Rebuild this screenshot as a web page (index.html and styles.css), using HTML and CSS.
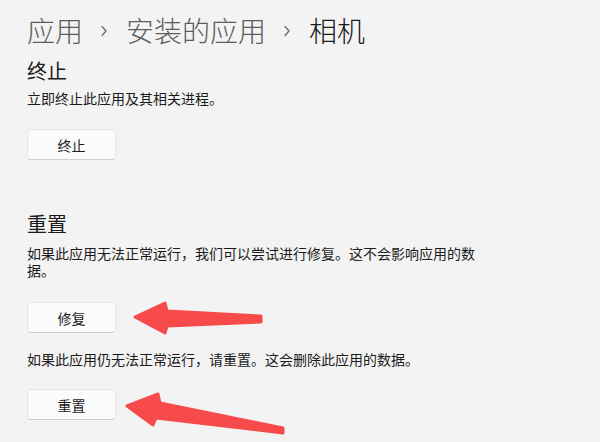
FILE: index.html
```html
<!DOCTYPE html>
<html lang="zh-CN">
<head>
<meta charset="utf-8">
<link rel="stylesheet" href="styles.css">
</head>
<body>
<div class="page">
  <nav class="crumbs">
    <span class="crumb">应用</span>
    <svg class="chev" width="8" height="12" viewBox="0 0 8 12"><path d="M2 1.5 L6 6 L2 10.5" fill="none" stroke="#6a6a6a" stroke-width="1.3" stroke-linecap="round" stroke-linejoin="round"/></svg>
    <span class="crumb">安装的应用</span>
    <svg class="chev" width="8" height="12" viewBox="0 0 8 12"><path d="M2 1.5 L6 6 L2 10.5" fill="none" stroke="#6a6a6a" stroke-width="1.3" stroke-linecap="round" stroke-linejoin="round"/></svg>
    <span class="crumb current">相机</span>
  </nav>

  <section class="section first">
    <h2 class="title">终止</h2>
    <p class="desc">立即终止此应用及其相关进程。</p>
    <button class="btn">终止</button>
  </section>

  <section class="section second">
    <h2 class="title">重置</h2>
    <p class="desc">如果此应用无法正常运行，我们可以尝试进行修复。这不会影响应用的数据。</p>
    <button class="btn btn-gap">修复</button>
    <p class="desc desc-gap">如果此应用仍无法正常运行，请重置。这会删除此应用的数据。</p>
    <button class="btn btn-gap2">重置</button>
  </section>
</div>
<svg class="arrows" width="600" height="442" viewBox="0 0 600 442">
  <polygon points="135,317 165,303 167,311 261,316 261,322 167,326 165,333" fill="#f74b4b" stroke="#f74b4b" stroke-width="3" stroke-linejoin="round"/>
  <polygon points="127,406 158,394 160,403 283,428 283,433 156,418 153,425" fill="#f74b4b" stroke="#f74b4b" stroke-width="3" stroke-linejoin="round"/>
</svg>
</body>
</html>
```

FILE: styles.css
```css
html, body {
  margin: 0;
  padding: 0;
  background: #f3f3f3;
  width: 600px;
  height: 442px;
  overflow: hidden;
}
body {
  position: relative;
  font-family: "Noto Sans CJK SC", "Noto Sans", sans-serif;
  color: #1b1b1b;
}
.page {
  display: flex;
  flex-direction: column;
  align-items: flex-start;
  padding: 10px 0 0 27px;
}
.crumbs {
  display: flex;
  align-items: center;
  height: 40px;
  font-size: 28px;
  line-height: 40px;
  font-weight: 300;
  color: #5d5d5d;
}
.crumb.current {
  color: #1a1a1a;
}
.chev {
  margin: 1px 18px 0 17px;
}
.section {
  display: flex;
  flex-direction: column;
  align-items: flex-start;
}
.section.first {
  margin-top: 7px;
}
.section.second {
  margin-top: 50px;
}
.title {
  margin: 0;
  font-size: 20px;
  line-height: 28px;
  font-weight: 400;
}
.desc {
  margin: 5px 0 0;
  font-size: 14px;
  line-height: 17px;
  max-width: 456px;
}
.second .desc {
  margin-top: 7px;
}
.second .desc.desc-gap {
  margin-top: 18px;
}
.btn {
  margin-top: 22px;
  width: 89px;
  height: 31px;
  box-sizing: border-box;
  background: #fbfbfb;
  border: 1px solid #e4e4e4;
  border-bottom-color: #cdcdcd;
  border-radius: 4px;
  font-family: "Noto Sans CJK SC", "Noto Sans", sans-serif;
  font-size: 14px;
  color: #1b1b1b;
  padding: 0;
}
.btn.btn-gap {
  margin-top: 23px;
}
.btn.btn-gap2 {
  margin-top: 21px;
}
.arrows {
  position: absolute;
  left: 0;
  top: 0;
  pointer-events: none;
}
```
